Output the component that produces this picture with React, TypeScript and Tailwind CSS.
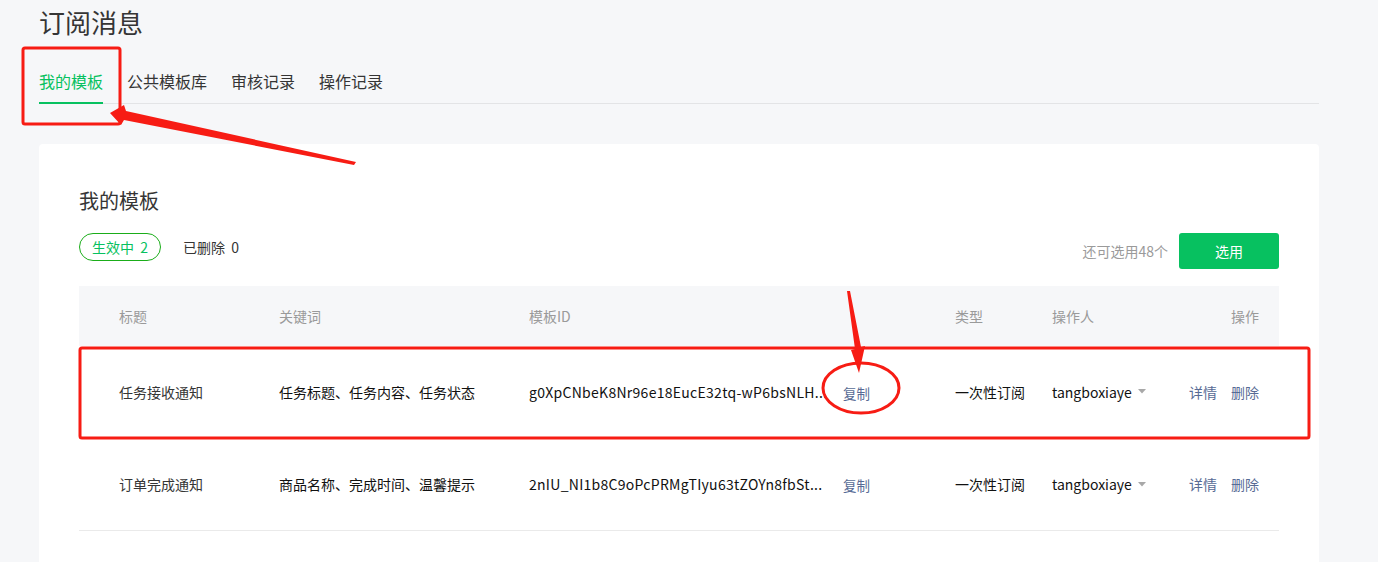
const font = { fontFamily: '"Noto Sans CJK SC", "Noto Sans", sans-serif' };

const rows = [
  {
    title: '任务接收通知',
    keywords: '任务标题、任务内容、任务状态',
    id: 'g0XpCNbeK8Nr96e18EucE32tq-wP6bsNLH...',
    type: '一次性订阅',
    user: 'tangboxiaye',
  },
  {
    title: '订单完成通知',
    keywords: '商品名称、完成时间、温馨提示',
    id: '2nIU_NI1b8C9oPcPRMgTIyu63tZOYn8fbSt...',
    type: '一次性订阅',
    user: 'tangboxiaye',
  },
];

const cols = 'grid grid-cols-[160px_250px_314px_112px_97px_137px_1fr] pl-10 pr-5 items-center leading-[20px]';

function Annotations() {
  return (
    <svg className="absolute left-0 top-0 pointer-events-none" width="1378" height="562">
      <rect x="23" y="48" width="97" height="76" rx="2" fill="none" stroke="#f71c14" strokeWidth="3" />
      <polygon
        points="110,113 124,105 126,111 356,162 354,165 124,120 121,125"
        fill="#f71c14"
      />
      <rect x="80" y="348" width="1229" height="90" rx="2" fill="none" stroke="#f71c14" strokeWidth="3" />
      <ellipse cx="861" cy="388" rx="38" ry="25" fill="none" stroke="#f71c14" strokeWidth="3" />
      <polygon points="847,291 850,291 861,347 865,346 859,373 851,350 855,349" fill="#f71c14" />
    </svg>
  );
}

export default function App() {
  return (
    <div className="relative min-h-screen bg-[#f6f7f9] overflow-hidden" style={font}>
      <div className="ml-[39px] w-[1280px]">
        <h1 className="pt-[4px] text-[26px] leading-[36px] text-[#353535]">订阅消息</h1>

        <div className="mt-[29px] flex gap-6 border-b border-[#e3e4e6] text-[16px] leading-[24px] text-[#353535]">
          <div className="-mb-px border-b-2 border-[#07c160] pb-[8px] text-[#07c160]">我的模板</div>
          <div className="pb-[10px]">公共模板库</div>
          <div className="pb-[10px]">审核记录</div>
          <div className="pb-[10px]">操作记录</div>
        </div>

        <div className="mt-10 rounded-[4px] bg-white px-10 pt-[43px] pb-10">
          <h2 className="text-[20px] leading-[28px] text-[#353535]">我的模板</h2>

          <div className="mt-[18px] flex h-9 items-start justify-between">
            <div className="flex items-center gap-[22px] text-[14px]">
              <span className="flex h-7 items-center rounded-full border border-[#1aad19] px-3 leading-[20px] text-[#07c160]">
                生效中&nbsp;&nbsp;2
              </span>
              <span className="leading-[20px] text-[#353535]">已删除&nbsp;&nbsp;0</span>
            </div>
            <div className="flex items-center gap-[11px]">
              <span className="text-[14px] text-[#9a9a9a]">还可选用48个</span>
              <button className="h-9 w-[100px] rounded-[3px] bg-[#07c160] text-[14px] text-white">选用</button>
            </div>
          </div>

          <div className="mt-[17px] text-[14px]">
            <div className={`${cols} h-[60px] bg-[#f6f7f9] text-[#9a9a9a]`}>
              <span>标题</span>
              <span>关键词</span>
              <span>模板ID</span>
              <span></span>
              <span>类型</span>
              <span>操作人</span>
              <span className="text-right">操作</span>
            </div>
            {rows.map((r) => (
              <div key={r.id} className={`${cols} h-[92.5px] border-b border-[#eaeaea]`}>
                <span className="text-[#353535]">{r.title}</span>
                <span className="text-[#111]">{r.keywords}</span>
                <span className="whitespace-nowrap tracking-[0.28px] text-[#111]">{r.id}</span>
                <span className="pt-[2px] text-[13.5px] text-[#576b95]">复制</span>
                <span className="text-[#111]">{r.type}</span>
                <span className="flex items-center gap-[6px] text-[#111]">
                  {r.user}
                  <svg width="8" height="5" viewBox="0 0 8 5">
                    <polygon points="0,0 8,0 4,4.5" fill="#a8a8a8" />
                  </svg>
                </span>
                <span className="flex justify-end gap-[14px] text-[#576b95]">
                  <span>详情</span>
                  <span>删除</span>
                </span>
              </div>
            ))}
          </div>
          <div className="h-20" />
        </div>
      </div>
      <Annotations />
    </div>
  );
}
